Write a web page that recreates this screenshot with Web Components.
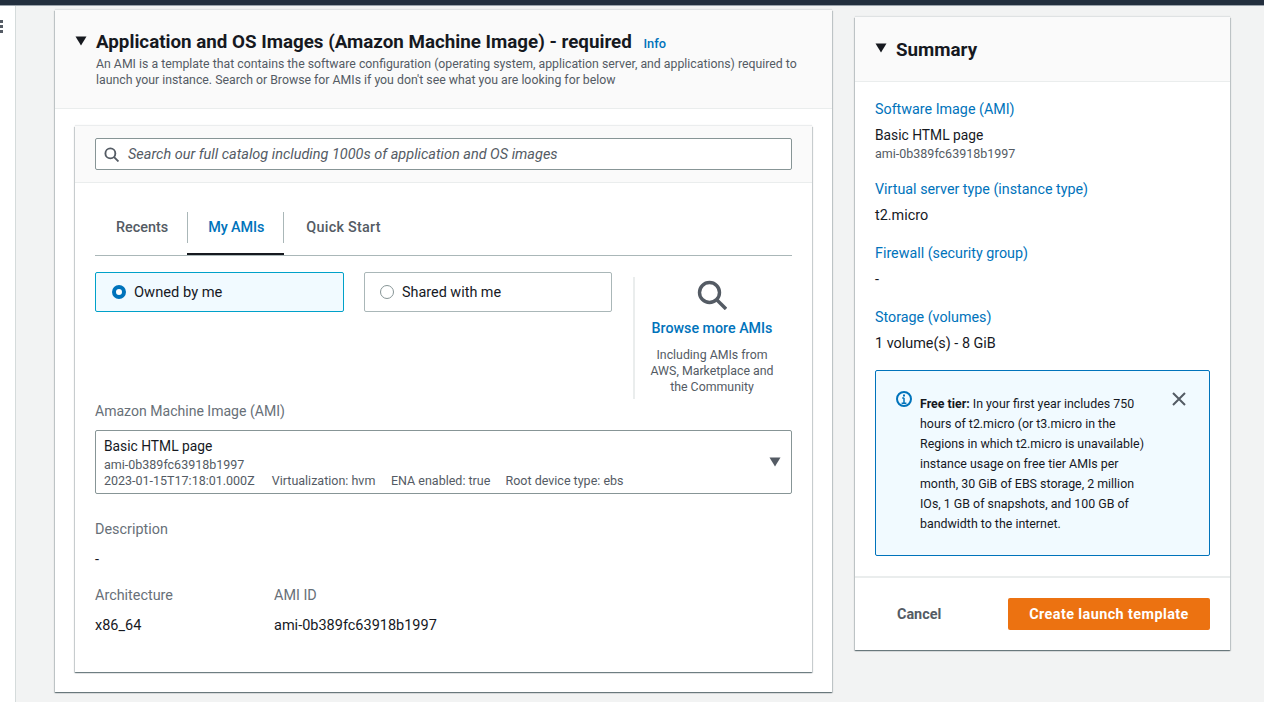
<!DOCTYPE html>
<html>
<head>
<meta charset="utf-8">
<title>Create launch template</title>
<style>
  html, body { margin: 0; height: 702px; overflow: hidden; background: #f2f3f3; font-family: Roboto, "Noto Sans", sans-serif; color: #16191f; }
</style>
</head>
<body>
<launch-page>
  <ami-section slot="main"></ami-section>
  <summary-panel slot="side"></summary-panel>
</launch-page>

<script>
  const CARET = `<svg width="12" height="10" viewBox="0 0 12 10"><path d="M0.5 0.5h11L6 9.5z" fill="currentColor"/></svg>`;
  const SHADOW = `box-shadow: 0 1px 1px 0 rgba(0,28,36,.4), 1px 1px 1px 0 rgba(0,28,36,.15), -1px 1px 1px 0 rgba(0,28,36,.15), 0 -1px 1px 0 rgba(0,28,36,.08);`;

  class LaunchPage extends HTMLElement {
    constructor() {
      super();
      this.attachShadow({ mode: 'open' }).innerHTML = `
        <style>
          :host { display: block; height: 702px; overflow: hidden; }
          .top { height: 5px; background: #232f3e; border-bottom: 1px solid #9aa3ab; }
          .body { display: flex; height: 696px; }
          .rail { flex: 0 0 15px; background: #fff; border-right: 1px solid #d5dbdb; }
          .dots { display: flex; flex-direction: column; gap: 2px; padding-top: 14px; width: 3px; }
          .dots i { display: block; width: 3px; height: 3px; background: #545b64; }
          .main { flex: 0 0 777px; margin-left: 39px; padding-top: 4px; }
          .side { flex: 0 0 375px; margin-left: 23px; padding-top: 11px; }
        </style>
        <div class="top"></div>
        <div class="body">
          <div class="rail"><div class="dots"><i></i><i></i><i></i></div></div>
          <div class="main"><slot name="main"></slot></div>
          <div class="side"><slot name="side"></slot></div>
        </div>
      `;
    }
  }

  class AmiSection extends HTMLElement {
    constructor() {
      super();
      this.attachShadow({ mode: 'open' }).innerHTML = `
        <style>
          :host { display: block; background: #fff; height: 682px; box-sizing: border-box; ${SHADOW} }
          header { height: 99px; box-sizing: border-box; background: #fafafa; border-bottom: 1px solid #eaeded; display: flex; padding: 20px 20px 0 20px; }
          .caret { flex: none; width: 21px; color: #16191f; padding-top: 6px; line-height: 0; }
          h2 { margin: 0; font-size: 18.78px; line-height: 24px; font-weight: 700; }
          h2 a { font-size: 12.8px; color: #0073bb; margin-left: 7px; font-weight: 500; }
          p { margin: 0; font-size: 12.3px; line-height: 16px; color: #545b64; }
          .card { margin: 17px 20px 0; height: 546px; box-sizing: border-box; ${SHADOW} background: #fff; }
          .search-bar { height: 57px; box-sizing: border-box; background: #fafafa; border-bottom: 1px solid #eaeded; padding: 12px 20px; }
          .search { height: 32px; box-sizing: border-box; border: 1px solid #879596; border-radius: 2px; background: #fff; display: flex; align-items: center; padding-left: 8px; gap: 9px; font-style: italic; font-size: 14.47px; color: #545b64; }
          .search span { padding-top: 1px; }
          .search svg { flex: none; }
          .content { padding: 0 20px; }
          .tabs { display: flex; height: 73px; box-sizing: border-box; padding-top: 29px; border-bottom: 1px solid #aab7b8; }
          .tab { height: 31px; box-sizing: border-box; padding: 0 19px 0 21px; display: flex; align-items: center; font-size: 14.4px; font-weight: 500; color: #545b64; }
          .tab.on { color: #0073bb; padding: 0 19px 0 20px; border-left: 1px solid #aab7b8; border-right: 1px solid #aab7b8; letter-spacing: -.1px; }
          .tabwrap { display: flex; flex-direction: column; height: 43px; }
          .tabwrap::after { content: ""; display: block; margin-top: auto; height: 2px; background: #16191f; }
          .tab.last { padding-left: 22px; letter-spacing: .25px; }
          .choices { display: flex; margin-top: 16px; height: 127px; }
          .radios { display: flex; gap: 20px; align-items: flex-start; }
          .box { width: 249px; height: 40px; box-sizing: border-box; border: 1px solid #aab7b8; border-radius: 2px; display: flex; align-items: center; padding-left: 16px; gap: 8px; font-size: 14.4px; }
          .box.on { background: #f1faff; border-color: #00a1c9; font-size: 14.7px; }
          .box + .box { width: 248px; padding-left: 15px; }
          .dot { width: 14px; height: 14px; box-sizing: border-box; border-radius: 50%; border: 1px solid #879596; background: #fff; flex: none; }
          .box.on .dot { border: 4.5px solid #0073bb; }
          .browse { margin: 5px 0 0 21px; width: 158px; height: 122px; box-sizing: border-box; border-left: 2px solid #eaeded; padding-right: 2px; text-align: center; display: flex; flex-direction: column; align-items: center; }
          .browse svg { display: block; margin-top: 3px; }
          .browse a { color: #0073bb; font-size: 14.25px; font-weight: 500; line-height: 20px; margin-top: 8px; }
          .browse span { font-size: 12.35px; line-height: 16px; color: #545b64; margin-top: 9px; width: 132px; }
          .lab { font-size: 14.4px; line-height: 20px; color: #687078; }
          .ami-lab { margin-top: 2px; height: 29px; font-size: 14.05px; }
          .select { height: 64px; box-sizing: border-box; border: 1px solid #879596; border-radius: 2px; padding: 5px 8px; position: relative; }
          .select b { display: block; font-weight: 400; font-size: 13.8px; line-height: 21px; }
          .select small { display: block; font-size: 12.5px; line-height: 16px; color: #545b64; }
          .select .meta span { margin-right: 14px; }
          .select .meta span:nth-child(2) { margin-right: 12.5px; }
          .select .meta span:nth-child(3) { margin-right: 12px; }
          .select svg { position: absolute; right: 10px; top: 26px; color: #545b64; }
          .kv { margin-top: 26px; }
          .val { font-size: 14.5px; line-height: 20px; margin-top: 10px; }
          .row { display: flex; margin-top: 16px; }
          .row > div:first-child { width: 179px; }
        </style>
        <header>
          <div class="caret">${CARET}</div>
          <div>
            <h2>Application and OS Images (Amazon Machine Image) - required <a>Info</a></h2>
            <p>An AMI is a template that contains the software configuration (operating system, application server, and applications) required to launch your instance. Search or Browse for AMIs if you don't see what you are looking for below</p>
          </div>
        </header>
        <div class="card">
          <div class="search-bar">
            <div class="search">
              <svg width="15" height="15" viewBox="0 0 16 16" fill="none" stroke="#545b64" stroke-width="2"><circle cx="6.8" cy="6.8" r="5.3"/><path d="M10.8 10.8l4.6 4.6"/></svg>
              <span>Search our full catalog including 1000s of application and OS images</span>
            </div>
          </div>
          <div class="content">
            <div class="tabs">
              <div class="tab">Recents</div>
              <div class="tabwrap"><div class="tab on">My AMIs</div></div>
              <div class="tab last">Quick Start</div>
            </div>
            <div class="choices">
              <div class="radios">
                <div class="box on"><i class="dot"></i>Owned by me</div>
                <div class="box"><i class="dot"></i>Shared with me</div>
              </div>
              <div class="browse">
                <svg width="30" height="30" viewBox="0 0 30 30" fill="none" stroke="#545b64" stroke-width="3.4"><circle cx="12.5" cy="12.5" r="10"/><path d="M20 20l9 9"/></svg>
                <a>Browse more AMIs</a>
                <span>Including AMIs from AWS, Marketplace and the Community</span>
              </div>
            </div>
            <div class="lab ami-lab">Amazon Machine Image (AMI)</div>
            <div class="select">
              <b>Basic HTML page</b>
              <small>ami-0b389fc63918b1997</small>
              <small class="meta"><span>2023-01-15T17:18:01.000Z</span> <span>Virtualization: hvm</span> <span>ENA enabled: true</span> <span>Root device type: ebs</span></small>
              <svg width="12" height="10" viewBox="0 0 12 10"><path d="M0.5 0.5h11L6 9.5z" fill="currentColor"/></svg>
            </div>
            <div class="kv">
              <div class="lab">Description</div>
              <div class="val">-</div>
            </div>
            <div class="row">
              <div><div class="lab">Architecture</div><div class="val">x86_64</div></div>
              <div><div class="lab">AMI ID</div><div class="val">ami-0b389fc63918b1997</div></div>
            </div>
          </div>
        </div>
      `;
    }
  }

  class SummaryItem extends HTMLElement {
    constructor() {
      super();
      this.attachShadow({ mode: 'open' }).innerHTML = `
        <style>
          :host { display: block; }
          a { display: block; color: #0073bb; font-size: 14.3px; line-height: 20px; }
          ::slotted(div) { font-size: 14.4px; line-height: 20px; margin-top: 7px; }
          ::slotted(div.name) { font-size: 13.8px; margin-top: 6px; }
          ::slotted(small) { display: block; font-size: 12.5px; line-height: 16px; color: #545b64; margin-top: 1px; }
        </style>
        <a>${this.getAttribute('label')}</a>
        <slot></slot>
      `;
    }
  }

  class InfoAlert extends HTMLElement {
    constructor() {
      super();
      this.attachShadow({ mode: 'open' }).innerHTML = `
        <style>
          :host { display: block; height: 186px; box-sizing: border-box; background: #f1faff; border: 1px solid #0073bb; border-radius: 2px; padding: 23px 20px 0 20px; position: relative; }
          .wrap { display: flex; gap: 8px; }
          svg.i { flex: none; margin-top: -3px; color: #0073bb; }
          .text { width: 236px; font-size: 12.4px; line-height: 20px; color: #16191f; }
          .x { position: absolute; right: 23px; top: 21px; line-height: 0; }
        </style>
        <div class="wrap">
          <svg class="i" width="16" height="16" viewBox="0 0 16 16" fill="none" stroke="currentColor" stroke-width="2"><circle cx="8" cy="8" r="7"/><path d="M8 7v5M5.6 12.2h4.8M6.2 7h2" stroke-width="1.5"/><path d="M8 3.4v2" stroke-width="2"/></svg>
          <div class="text"><slot></slot></div>
        </div>
        <svg class="x" width="14" height="14" viewBox="0 0 14 14" fill="none" stroke="#545b64" stroke-width="2"><path d="M1 1l12 12M13 1L1 13"/></svg>
      `;
    }
  }

  class SummaryPanel extends HTMLElement {
    constructor() {
      super();
      this.attachShadow({ mode: 'open' }).innerHTML = `
        <style>
          :host { display: block; background: #fff; height: 633px; box-sizing: border-box; ${SHADOW} }
          header { height: 65px; box-sizing: border-box; background: #fafafa; border-bottom: 1px solid #eaeded; display: flex; padding: 21px 20px 0; }
          .caret { flex: none; width: 21px; padding-top: 5px; line-height: 0; }
          h2 { margin: 0; font-size: 18.78px; line-height: 24px; font-weight: 700; }
          .items { padding: 17px 20px 0; height: 496px; box-sizing: border-box; display: flex; flex-direction: column; border-bottom: 2px solid #eaeded; }
          summary-item { margin-bottom: 17px; }
          summary-item.last { margin-bottom: 16px; }
          b { font-weight: 700; }
          footer { display: flex; justify-content: space-between; align-items: center; padding: 20px 20px 0 42px; }
          .cancel { font-size: 14.4px; font-weight: 700; color: #545b64; }
          .create { width: 202px; height: 32px; background: #ec7211; border-radius: 2px; color: #fff; font-size: 14.4px; font-weight: 700; letter-spacing: .42px; display: flex; align-items: center; justify-content: center; }
        </style>
        <header><div class="caret">${CARET}</div><h2>Summary</h2></header>
        <div class="items">
          <summary-item class="first" label="Software Image (AMI)"><div class="name">Basic HTML page</div><small>ami-0b389fc63918b1997</small></summary-item>
          <summary-item label="Virtual server type (instance type)"><div>t2.micro</div></summary-item>
          <summary-item label="Firewall (security group)"><div>-</div></summary-item>
          <summary-item class="last" label="Storage (volumes)"><div>1 volume(s) - 8 GiB</div></summary-item>
          <info-alert><b>Free tier:</b> In your first year includes 750 hours of t2.micro (or t3.micro in the Regions in which t2.micro is unavailable) instance usage on free tier AMIs per month, 30 GiB of EBS storage, 2 million IOs, 1 GB of snapshots, and 100 GB of bandwidth to the internet.</info-alert>
        </div>
        <footer>
          <span class="cancel">Cancel</span>
          <span class="create">Create launch template</span>
        </footer>
      `;
    }
  }

  customElements.define('summary-item', SummaryItem);
  customElements.define('info-alert', InfoAlert);
  customElements.define('ami-section', AmiSection);
  customElements.define('summary-panel', SummaryPanel);
  customElements.define('launch-page', LaunchPage);
</script>
</body>
</html>
